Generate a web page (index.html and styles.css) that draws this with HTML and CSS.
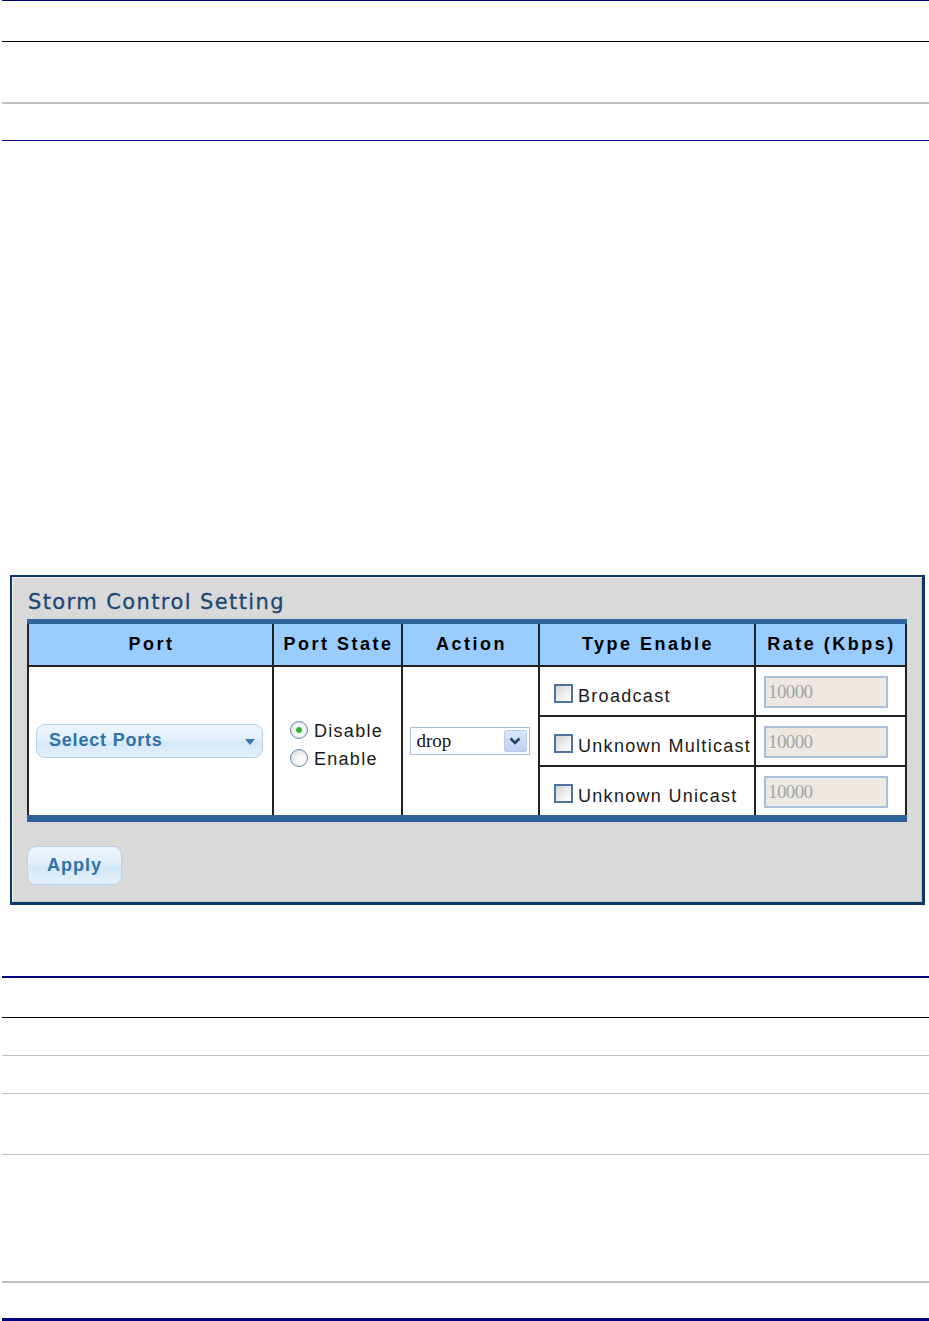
FILE: index.html
```html
<!DOCTYPE html>
<html lang="en">
<head>
    <meta charset="UTF-8">
    <meta name="viewport" content="width=device-width, initial-scale=1.0">
    <title>Storm Control Setting</title>
    <link rel="stylesheet" href="styles.css">
</head>
<body>
    <div class="doc-table doc-top">
        <div class="doc-row r1"></div>
        <div class="doc-row r2"></div>
        <div class="doc-row r3"></div>
    </div>

    <div class="panel">
        <h2 class="panel-title">Storm Control Setting</h2>

        <table class="storm-table">
            <colgroup>
                <col class="c-port">
                <col class="c-state">
                <col class="c-action">
                <col class="c-type">
                <col class="c-rate">
            </colgroup>
            <thead>
                <tr>
                    <th>Port</th>
                    <th>Port State</th>
                    <th>Action</th>
                    <th>Type Enable</th>
                    <th>Rate (Kbps)</th>
                </tr>
            </thead>
            <tbody>
                <tr>
                    <td rowspan="3" class="center">
                        <button class="btn select-ports" type="button">
                            <span>Select Ports</span>
                            <svg class="caret" width="10" height="6" viewBox="0 0 10 6"><path d="M0 0 L10 0 L5 6 Z" fill="#3b79b1"/></svg>
                        </button>
                    </td>
                    <td rowspan="3" class="center">
                        <div class="radio-group">
                            <label class="radio-line"><input type="radio" name="state" checked> Disable</label>
                            <label class="radio-line"><input type="radio" name="state"> Enable</label>
                        </div>
                    </td>
                    <td rowspan="3" class="center">
                        <div class="select">
                            <span class="select-value">drop</span>
                            <span class="select-arrow">
                                <svg width="12" height="8" viewBox="0 0 12 8"><polyline points="1.5,1.5 6,6 10.5,1.5" fill="none" stroke="#23416f" stroke-width="2.6"/></svg>
                            </span>
                        </div>
                    </td>
                    <td class="type"><label class="check-line"><input type="checkbox"> Broadcast</label></td>
                    <td class="rate"><input class="rate-input" type="text" value="10000" disabled></td>
                </tr>
                <tr>
                    <td class="type"><label class="check-line"><input type="checkbox"> Unknown Multicast</label></td>
                    <td class="rate"><input class="rate-input" type="text" value="10000" disabled></td>
                </tr>
                <tr>
                    <td class="type"><label class="check-line"><input type="checkbox"> Unknown Unicast</label></td>
                    <td class="rate"><input class="rate-input" type="text" value="10000" disabled></td>
                </tr>
            </tbody>
        </table>

        <button class="btn apply" type="button">Apply</button>
    </div>

    <div class="doc-table doc-bottom">
        <div class="doc-row b1"></div>
        <div class="doc-row b2"></div>
        <div class="doc-row b3"></div>
        <div class="doc-row b4"></div>
        <div class="doc-row b5"></div>
        <div class="doc-row b6"></div>
    </div>
</body>
</html>
```

FILE: styles.css
```css
:root {
    --navy: #000080;
    --rule-gray: #c0c0c0;
    --panel-border: #0d3868;
    --panel-bg: #d9d9d9;
    --bar-color: #30639a;
    --head-bg: #99ccff;
    --cell-line: #222222;
    --btn-text: #2f72aa;
}

body {
    margin: 0;
    background: #ffffff;
    font-family: "Liberation Sans", Arial, sans-serif;
    color: #1a1a1a;
}

/* document rules around the screenshot */
.doc-table {
    margin-left: 2px;
}

.doc-top {
    border-top: 1px solid var(--navy);
    border-bottom: 1px solid var(--navy);
}

.r1 { height: 40px; }
.r2 { height: 60px; border-top: 1px solid #000; }
.r3 { height: 36px; border-top: 2px solid var(--rule-gray); }

.doc-bottom {
    margin-top: 71px;
    border-top: 2px solid var(--navy);
    border-bottom: 3px solid var(--navy);
}

.b1 { height: 39px; }
.b2 { height: 37px; border-top: 1px solid #000; }
.b3 { height: 37px; border-top: 1px solid var(--rule-gray); }
.b4 { height: 60px; border-top: 1px solid var(--rule-gray); }
.b5 { height: 126px; border-top: 1px solid var(--rule-gray); }
.b6 { height: 35px; border-top: 2px solid var(--rule-gray); }

/* panel */
.panel {
    box-sizing: border-box;
    width: 915px;
    margin: 434px 0 0 10px;
    padding: 12px 16px 17px 15px;
    background: var(--panel-bg);
    border-style: solid;
    border-color: var(--panel-border);
    border-width: 2px 3px 3px 2px;
    box-shadow: inset 1px 1px 0 #f2f2f2, inset -1px -1px 0 #c4c4c4;
}

.panel-title {
    margin: 0 0 4px;
    font-family: "DejaVu Sans", Verdana, sans-serif;
    font-size: 21px;
    line-height: 26px;
    font-weight: normal;
    letter-spacing: 1.4px;
    color: #1b4874;
    padding-left: 1px;
    -webkit-text-stroke: 0.3px #1b4874;
}

/* table */
.storm-table {
    width: 878px;
    table-layout: fixed;
    border-collapse: collapse;
    background: #ffffff;
    border-top: 5px solid var(--bar-color);
    border-bottom: 7px solid var(--bar-color);
}

.c-port { width: 245px; }
.c-state { width: 129px; }
.c-action { width: 137px; }
.c-type { width: 216px; }
.c-rate { width: 151px; }

.storm-table th,
.storm-table td {
    border-left: 2px solid var(--cell-line);
    border-right: 2px solid var(--cell-line);
    padding: 0;
}

.storm-table th {
    height: 41px;
    background: var(--head-bg);
    font-size: 18px;
    font-weight: bold;
    letter-spacing: 2.5px;
    color: #000;
    border-bottom: 2px solid var(--cell-line);
    padding-left: 2px;
}

.storm-table td {
    height: 48px;
    border-bottom: 2px solid var(--cell-line);
    font-size: 18px;
    letter-spacing: 1.3px;
}

.storm-table tbody tr:last-child td {
    border-bottom: none;
}

.center {
    text-align: center;
    vertical-align: middle;
}

/* buttons */
.btn {
    font-family: "Liberation Sans", Arial, sans-serif;
    font-weight: bold;
    font-size: 18px;
    color: var(--btn-text);
    border: 1px solid #b2d3ef;
    border-radius: 9px;
    background: linear-gradient(#edf6fd 0%, #e2effb 45%, #d4e8f8 55%, #e4f1fc 100%);
    cursor: pointer;
    padding: 0;
}

.select-ports {
    width: 227px;
    height: 34px;
    margin-left: -2px;
    display: inline-flex;
    align-items: center;
    justify-content: space-between;
    padding: 0 7px 0 12px;
    letter-spacing: 0.8px;
    vertical-align: middle;
}

.select-ports span {
    margin-top: -2px;
}

.select-ports .caret {
    margin-top: 2px;
}

.apply {
    display: block;
    width: 95px;
    height: 39px;
    margin-top: 24px;
    letter-spacing: 1px;
}

/* radios */
.radio-group {
    display: inline-flex;
    flex-direction: column;
    text-align: left;
    margin-left: -2px;
    padding-top: 9px;
}

.radio-line {
    display: flex;
    align-items: center;
    gap: 6px;
    height: 28px;
}

.radio-line input {
    appearance: none;
    margin: 0 0 4px;
    width: 18px;
    height: 18px;
    border: 1px solid #6a8db5;
    border-radius: 50%;
    background: radial-gradient(circle at 65% 65%, #ffffff 0, #f3f3f3 40%, #cfcfcf 100%);
}

.radio-line input:checked {
    background: radial-gradient(circle, #1f9a1f 0, #3cc13c 2.5px, #dff3df 3.5px, #ffffff 4.5px, #eeeeee 60%, #cfcfcf 100%);
}

/* select */
.select {
    box-sizing: border-box;
    display: inline-flex;
    align-items: center;
    justify-content: space-between;
    width: 120px;
    height: 28px;
    margin-left: -2px;
    padding: 0 2px 0 6px;
    border: 1px solid #a7bed8;
    background: #ffffff;
    vertical-align: middle;
    letter-spacing: 0;
}

.select-value {
    font-family: "Liberation Serif", "Times New Roman", serif;
    font-size: 19px;
    color: #111;
    padding-bottom: 1px;
}

.select-arrow {
    box-sizing: border-box;
    width: 23px;
    height: 22px;
    display: flex;
    align-items: center;
    justify-content: center;
    border: 1px solid #bccde9;
    border-radius: 2px;
    background: linear-gradient(#dbe7fa, #bed1f3);
}

/* checkboxes */
.storm-table td.type {
    height: 38px;
    padding: 10px 0 0 14px;
    vertical-align: middle;
}

.check-line {
    display: flex;
    align-items: center;
    gap: 5px;
    white-space: nowrap;
}

.check-line input {
    appearance: none;
    margin: 0 0 5px;
    width: 19px;
    height: 19px;
    border: 2px solid #4a74a2;
    background: linear-gradient(135deg, #d2d2d2 0%, #ececec 50%, #ffffff 100%);
}

/* rate inputs */
.storm-table td.rate {
    height: 47px;
    padding: 1px 0 0 8px;
    vertical-align: middle;
}

.rate-input {
    box-sizing: border-box;
    width: 124px;
    height: 32px;
    margin: 0;
    padding: 0 0 0 2px;
    border: 2px solid #a9c0da;
    background: #ebe9e2;
    font-family: "Liberation Serif", "Times New Roman", serif;
    font-size: 19px;
    letter-spacing: -0.6px;
    color: #a6a6a6;
    display: block;
}
```
